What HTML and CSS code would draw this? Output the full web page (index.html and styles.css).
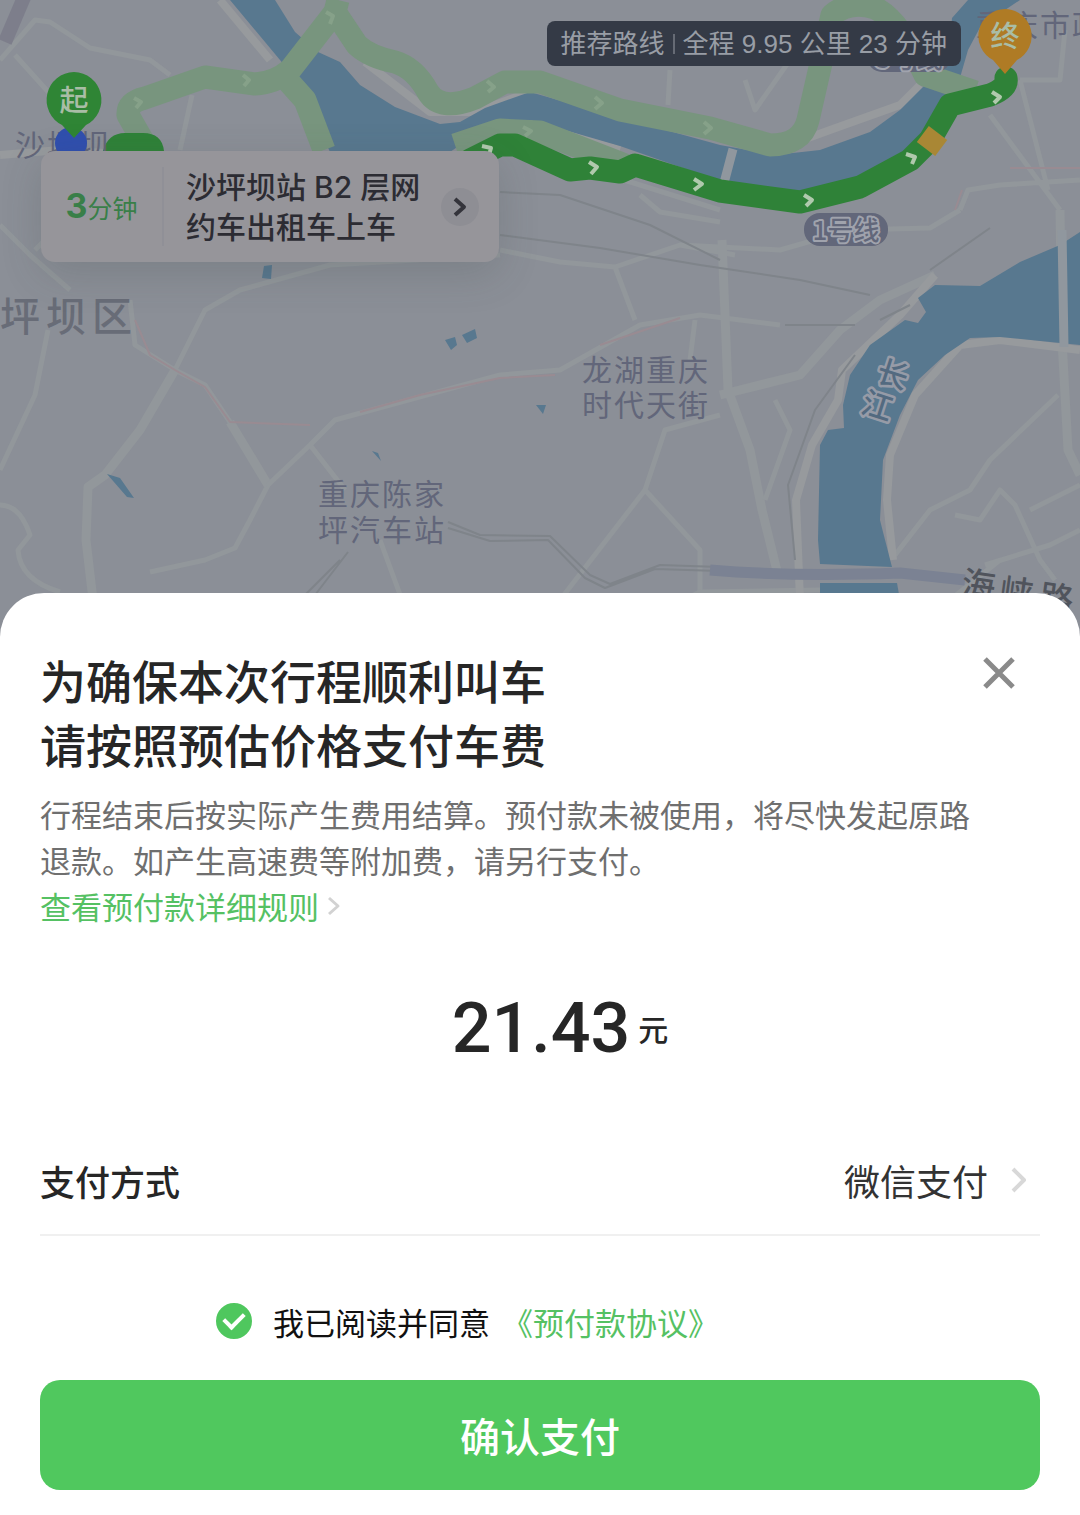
FILE: index.html
```
<!DOCTYPE html>
<html lang="zh-CN">
<head>
  <meta charset="UTF-8" />
  <meta name="viewport" content="width=device-width, initial-scale=1.0"/>
  <title>确认支付</title>
  <link rel="stylesheet" href="styles.css">
</head>
<body>

  <!-- 地图 -->
  <div class="map">
    <svg class="map-canvas" viewBox="0 0 1080 640" preserveAspectRatio="xMinYMin slice" role="img" aria-label="路线地图">
      <!-- 道路 -->
      <g class="road">
        <path d="M0 60L35 20 50 22 90 48 150 60 170 75M15 55L60 105M192 95L180 150"/>
        <path d="M0 225L30 255 70 290M35 250L75 210M130 300L135 345 175 370 205 385 230 422 268 485 250 520 235 548 205 560 150 572M175 370L205 310 240 290 330 265 500 255"/>
        <path class="wide" d="M175 370L140 430 105 475 88 487 86 540 93 600M230 422L268 485"/>
        <path d="M0 470L35 395 48 330M0 505Q20 505 30 535L18 550Q20 580 60 592M268 485L310 445 345 490M380 540L402 600M310 445L335 420 500 375 560 370 640 325 700 315 780 325"/>
        <path d="M500 250L560 262 615 267 680 245 780 250 850 230 930 228 960 210M615 267L635 320M680 245L735 255"/>
        <path class="wide" d="M722 240L728 390 750 450 762 510 778 575M720 395L800 375 840 330 880 300 935 275"/>
        <path d="M695 320L690 360M560 600L645 490 665 430 720 415M645 490L700 550 700 600"/>
        <path d="M640 195L660 212 720 222M670 70L668 105M560 160L720 210M745 80L755 110 790 60M960 210L968 190 1000 185 1080 180M990 115L1060 210M1020 80L1048 190M1020 80L1060 80 1065 30"/>
        <path class="wide" d="M1060 210L1062 340 1068 450 1080 475"/>
        <path d="M1058 395L990 460 970 490 930 510 895 555M955 515L980 520 1000 490 1015 505 1040 560 1055 580M1030 510L1080 485M985 565L1050 545 1080 530M950 600L1000 560"/>
        <path d="M775 400L790 430 765 500M640 620L700 592 820 590"/>
        <path class="bank" d="M800 600L796 500 812 445 838 400 842 370 900 315 935 275M893 560L887 500 890 455 915 395 960 345 1000 340 1080 350M220 0L270 60M0 155L60 150 180 158M775 150L830 130 900 105 920 85M365 62L430 112 475 112 530 92M530 122L620 150"/>
      </g>
      <g class="road red">
        <path d="M135 320L150 355 175 370 205 387 230 422 310 425M360 412L420 395 500 378 555 375M600 345L680 318M1010 168L1080 168M955 210L962 190"/>
      </g>
      <g class="rail">
        <path d="M500 192L560 195 650 225 720 260M500 235L600 248 700 265 800 280 870 295M930 270L990 228M340 560L305 595M348 552L315 595M448 522L480 535 550 536 590 575 610 584 660 565 720 567M448 528L490 541 548 540 585 578 605 588 655 569 720 571M785 325L855 325M855 355L815 410 788 485 795 560M880 320L910 305"/>
      </g>
      <path class="road thick" d="M25 -5L5 42"/>

      <!-- 水系 -->
      <g class="water">
        <path d="M230 0L275 0 295 32 318 52 340 62 360 85 395 107 440 124 460 122 485 108 530 92 600 112 720 145 775 155 820 150 870 132 900 110 925 85 930 72 950 45 952 18 968 0 1020 0 1005 10 985 18 968 50 955 95 930 140 830 195 740 188 620 146 530 120 490 125 450 152 330 152 310 110 285 66Z"/>
        <path d="M1080 232L1060 245 1020 262 980 286 935 285 918 298 926 312 918 323 905 320 870 345 850 375 843 405 844 428 828 430 820 445 818 540 820 564 892 567 883 532 880 520 883 460 900 415 918 380 945 355 970 338 1000 337 1080 345Z"/>
        <path d="M820 583L897 583 900 600 820 600Z"/>
        <path d="M107 474L120 478 134 498 127 497ZM264 266L272 265 271 279 262 278ZM445 340L455 337 457 345 451 350ZM462 335L475 329 477 338 467 343ZM536 405L546 405 543 414ZM372 451L378 453 381 461Z"/>
      </g>
      <path class="bridge" d="M733 149L724 183M1062 230L1064 347"/>
      <path class="highway" d="M710 570Q790 577 900 573L965 580"/>

      <!-- 备选路线 -->
      <g class="route route-alt">
        <path d="M148 150L128 115Q127 102 145 98L205 77 255 84Q275 83 290 70L335 12 338 0M335 12L357 45Q370 57 395 62 415 68 428 92 440 112 475 98L505 82 540 82 620 110 710 128 770 145Q802 145 808 120L832 15Q850 0 875 8 900 20 925 75L975 92M280 72L305 100 324 150M455 145L500 130 540 132 625 165"/>
      </g>
      <!-- 推荐路线 -->
      <path class="route route-main" d="M470 160L500 145 515 145 570 170 590 168 620 172 635 165 720 191 800 202 860 187 910 160 930 140 950 105 990 95Q1008 88 1006 78"/>
      <path class="route route-slow" d="M926 149L938 133"/>
      <path class="route-start" d="M103 151Q108 133 125 133H143Q162 133 164 151Z"/>
      <g class="arrow">
        <path d="M482 146L491 148 489 155"/>
        <path d="M589 162L597 167 591 174"/>
        <path d="M694 179L702 184 694 190"/>
        <path d="M804 195L812 200 806 206"/>
        <path d="M906 154L915 157 912 164"/>
        <path d="M992 92L1000 97 994 103"/>
      </g>
      <g class="arrow faint">
        <path d="M243 75L249 80 244 86M326 12L333 16 330 24M134 98L141 102 136 108M487 81L494 87 488 92M595 97L602 103 595 109M704 122L711 128 704 134M523 127L531 131 525 136"/>
      </g>

      <!-- 地名 -->
      <g class="place">
        <text class="district" x="0" y="331">坪坝区</text>
        <text x="582" y="381">龙湖重庆</text>
        <text x="582" y="416">时代天街</text>
        <text x="318" y="505">重庆陈家</text>
        <text x="318" y="541">坪汽车站</text>
        <text x="15" y="156">沙坪坝</text>
        <text x="976" y="36">重庆市政府</text>
        <g class="street">
          <text transform="rotate(8 962 594)" x="960" y="595">海</text>
          <text transform="rotate(8 1002 602)" x="998" y="603">峡</text>
          <text transform="rotate(8 1042 609)" x="1038" y="609">路</text>
        </g>
      </g>
      <g class="river-name">
        <text transform="rotate(18 893 375)" x="877" y="386">长</text>
        <text transform="rotate(18 877 406)" x="862" y="417">江</text>
      </g>
      <g class="metro">
        <rect x="804" y="213" width="84" height="33" rx="16"/>
        <text x="846" y="240">1号线</text>
        <rect x="867" y="41" width="84" height="31" rx="15"/>
        <text x="909" y="68">3号线</text>
      </g>

      <!-- 起点 / 终点 -->
      <circle class="location" cx="71" cy="143" r="16"/>
      <path class="pin-start" d="M74 72a28 28 0 0 1 12 53L74 138 62 125A28 28 0 0 1 74 72Z"/>
      <text class="pin-text" x="74" y="111">起</text>
      <path class="pin-end" d="M1005 9a27 27 0 0 1 12 51L1005 74 993 60A27 27 0 0 1 1005 9Z"/>
      <text class="pin-text" x="1005" y="47">终</text>
    </svg>

    <div class="route-tip">
      <span>推荐路线</span>
      <i class="tip-line"></i>
      <span>全程 9.95 公里 23 分钟</span>
    </div>

    <button class="pickup" type="button">
      <span class="wait"><b>3</b>分钟</span>
      <span class="pickup-name">沙坪坝站 B2 层网<br>约车出租车上车</span>
      <span class="pickup-go">
        <svg width="16" height="24" viewBox="0 0 16 24"><path d="M3 4L12 12 3 20"/></svg>
      </span>
    </button>
  </div>

  <!-- 预付款弹层 -->
  <main class="sheet">
    <header class="sheet-head">
      <h1>为确保本次行程顺利叫车<br>请按照预估价格支付车费</h1>
      <button class="close" type="button" aria-label="关闭">
        <svg width="34" height="34" viewBox="0 0 34 34"><path d="M3 3L31 31M31 3L3 31"/></svg>
      </button>
    </header>

    <p class="desc">行程结束后按实际产生费用结算。预付款未被使用，将尽快发起原路退款。如产生高速费等附加费，请另行支付。</p>
    <a class="rules" href="#">查看预付款详细规则
      <svg width="14" height="22" viewBox="0 0 14 22"><path d="M2 3L11 11 2 19"/></svg>
    </a>

    <div class="price"><strong>21.43</strong><span>元</span></div>

    <div class="pay-row">
      <h2>支付方式</h2>
      <button class="pay-method" type="button">微信支付
        <svg width="18" height="28" viewBox="0 0 18 28"><path d="M3 3L14 14 3 25"/></svg>
      </button>
    </div>

    <div class="agree">
      <input type="checkbox" id="agree" checked />
      <label for="agree">我已阅读并同意</label>
      <a href="#">《预付款协议》</a>
    </div>

    <button class="confirm" type="button">确认支付</button>
  </main>

</body>
</html>
```
FILE: styles.css
```
/*── 全体 ──*/
* {
  box-sizing: border-box;
}
body {
  margin: 0;
  font-family: "Noto Sans CJK SC", "Noto Sans", sans-serif;
  background: #fff;
  color: #262626;
}
h1, h2, p {
  margin: 0;
}
button {
  padding: 0;
  border: none;
  background: none;
  font-family: inherit;
  color: inherit;
  cursor: pointer;
}
a {
  color: #55c163;
  text-decoration: none;
}
svg {
  fill: none;
  stroke-linejoin: round;
}

/*── 地图 ──*/
.map {
  position: relative;
  height: 640px;
  overflow: hidden;
}
.map-canvas {
  display: block;
  width: 100%;
  height: 100%;
  background: #8b8f97;
}
.road {
  stroke: #92979b;
  stroke-width: 5;
}
.road .wide {
  stroke-width: 9;
}
.road .bank {
  stroke: #979a9d;
  stroke-width: 8;
}
.road.red {
  stroke: #998b92;
  stroke-width: 2;
}
.road.thick {
  stroke: #7d7e8b;
  stroke-width: 14;
}
.rail {
  stroke: #7f848a;
  stroke-width: 2;
}
.water {
  fill: #58788f;
}
.bridge {
  stroke: #90979e;
  stroke-width: 9;
}
.highway {
  stroke: #7b8293;
  stroke-width: 11;
}
.route {
  stroke-width: 23;
}
.route-alt {
  stroke: #78957e;
}
.route-main {
  stroke: #2f8238;
  stroke-linecap: round;
}
.route-slow {
  stroke: #a98735;
}
.route-start {
  fill: #2f8238;
}
.arrow {
  stroke: #b0c9ad;
  stroke-width: 4;
}
.arrow.faint {
  stroke: #86a189;
}
.place {
  fill: #62667a;
  font-size: 30px;
  letter-spacing: 2px;
}
.place .district {
  fill: #686c77;
  font-size: 40px;
  font-weight: 500;
  letter-spacing: 6px;
}
.street {
  fill: #50545c;
  font-size: 34px;
  font-weight: 500;
}
.river-name {
  fill: #536a80;
  stroke: #969ba7;
  stroke-width: 5;
  paint-order: stroke;
  font-size: 31px;
  font-weight: 500;
}
.metro rect {
  fill: #62677a;
}
.metro text {
  fill: #62677a;
  stroke: #a0a3ad;
  stroke-width: 4;
  paint-order: stroke;
  font-size: 26px;
  font-weight: 500;
  text-anchor: middle;
}
.location {
  fill: #304fae;
}
.pin-start {
  fill: #2f8535;
}
.pin-end {
  fill: #af7b25;
}
.pin-text {
  fill: #a9bda6;
  font-size: 29px;
  font-weight: 500;
  text-anchor: middle;
}

/*── 路线提示 ──*/
.route-tip {
  position: absolute;
  top: 21px;
  right: 119px;
  display: flex;
  align-items: center;
  gap: 8px;
  height: 45px;
  padding: 0 14px;
  border-radius: 8px;
  background: #343a46;
  color: #989da5;
  font-family: "Liberation Sans", "Noto Sans CJK SC", sans-serif;
  font-size: 26px;
  line-height: 40px;
  white-space: nowrap;
}
.tip-line {
  width: 2px;
  height: 20px;
  background: #666b75;
}

/*── 上车点 ──*/
.pickup {
  position: absolute;
  top: 151px;
  left: 41px;
  display: flex;
  align-items: center;
  width: 458px;
  height: 111px;
  padding-right: 20px;
  border-radius: 14px;
  background: #96959a;
  box-shadow: 0 12px 40px rgba(60, 70, 70, 0.2);
  color: #2c2c33;
  text-align: left;
}
.wait {
  width: 123px;
  border-right: 2px solid #909097;
  color: #397f48;
  font-size: 25px;
  line-height: 78px;
  text-align: center;
}
.wait b {
  font-family: Inter, "Noto Sans", sans-serif;
  font-size: 34px;
}
.pickup-name {
  flex: 1;
  padding-left: 22px;
  font-family: Inter, "Noto Sans CJK SC", sans-serif;
  font-size: 30px;
  font-weight: 500;
  line-height: 40px;
  white-space: nowrap;
}
.pickup-go {
  display: flex;
  align-items: center;
  justify-content: center;
  width: 38px;
  height: 38px;
  border-radius: 50%;
  background: #8e8e94;
}
.pickup-go svg {
  stroke: #34343b;
  stroke-width: 4;
}

/*── 弹层 ──*/
.sheet {
  position: relative;
  margin-top: -47px;
  padding: 54px 40px 25px;
  border-radius: 44px 44px 0 0;
  background: #fff;
}
.sheet-head {
  display: flex;
  align-items: flex-start;
  justify-content: space-between;
}
.sheet-head h1 {
  font-size: 46px;
  font-weight: 500;
  line-height: 64px;
}
.close {
  margin: 9px 24px 0 0;
  height: 34px;
}
.close svg {
  display: block;
  stroke: #8a8a8a;
  stroke-width: 5;
}
.desc {
  max-width: 940px;
  margin-top: 16px;
  color: #6f6f6f;
  font-size: 31px;
  line-height: 46px;
}
.rules {
  display: flex;
  align-items: center;
  gap: 8px;
  font-size: 31px;
  line-height: 46px;
}
.rules svg {
  stroke: #d2d2d2;
  stroke-width: 3;
}
.price {
  display: flex;
  align-items: center;
  justify-content: center;
  gap: 8px;
  margin-top: 49px;
  padding-left: 40px;
  line-height: 100px;
}
.price strong {
  font-family: Roboto, sans-serif;
  font-size: 70px;
  font-weight: 500;
}
.price span {
  font-size: 30px;
  font-weight: 500;
}

/*── 支付方式 ──*/
.pay-row {
  display: flex;
  align-items: center;
  justify-content: space-between;
  height: 110px;
  margin-top: 48px;
  border-bottom: 2px solid #f0f0f0;
}
.pay-row h2 {
  font-size: 35px;
  font-weight: 500;
}
.pay-method {
  display: flex;
  align-items: center;
  gap: 22px;
  padding-right: 12px;
  color: #333;
  font-size: 36px;
}
.pay-method svg {
  stroke: #d8d8d8;
  stroke-width: 4;
}

/*── 协议 ──*/
.agree {
  display: flex;
  align-items: center;
  height: 46px;
  margin: 62px 0 36px;
  padding-left: 176px;
  color: #111;
  font-size: 31px;
}
.agree input {
  appearance: none;
  display: flex;
  align-items: center;
  justify-content: center;
  width: 36px;
  height: 36px;
  margin: 0 21px 0 0;
  border: 2px solid #ccc;
  border-radius: 50%;
}
.agree input:checked {
  border-color: #4fc75e;
  background: #4fc75e;
}
.agree input:checked::after {
  content: "";
  width: 16px;
  height: 9px;
  margin-bottom: 5px;
  border-left: 4px solid #fff;
  border-bottom: 4px solid #fff;
  transform: rotate(-45deg);
}
.agree a {
  margin-left: 12px;
}
.confirm {
  display: block;
  width: 100%;
  height: 110px;
  border-radius: 20px;
  background: #50c85e;
  color: #fff;
  font-size: 40px;
  font-weight: 500;
}
```
